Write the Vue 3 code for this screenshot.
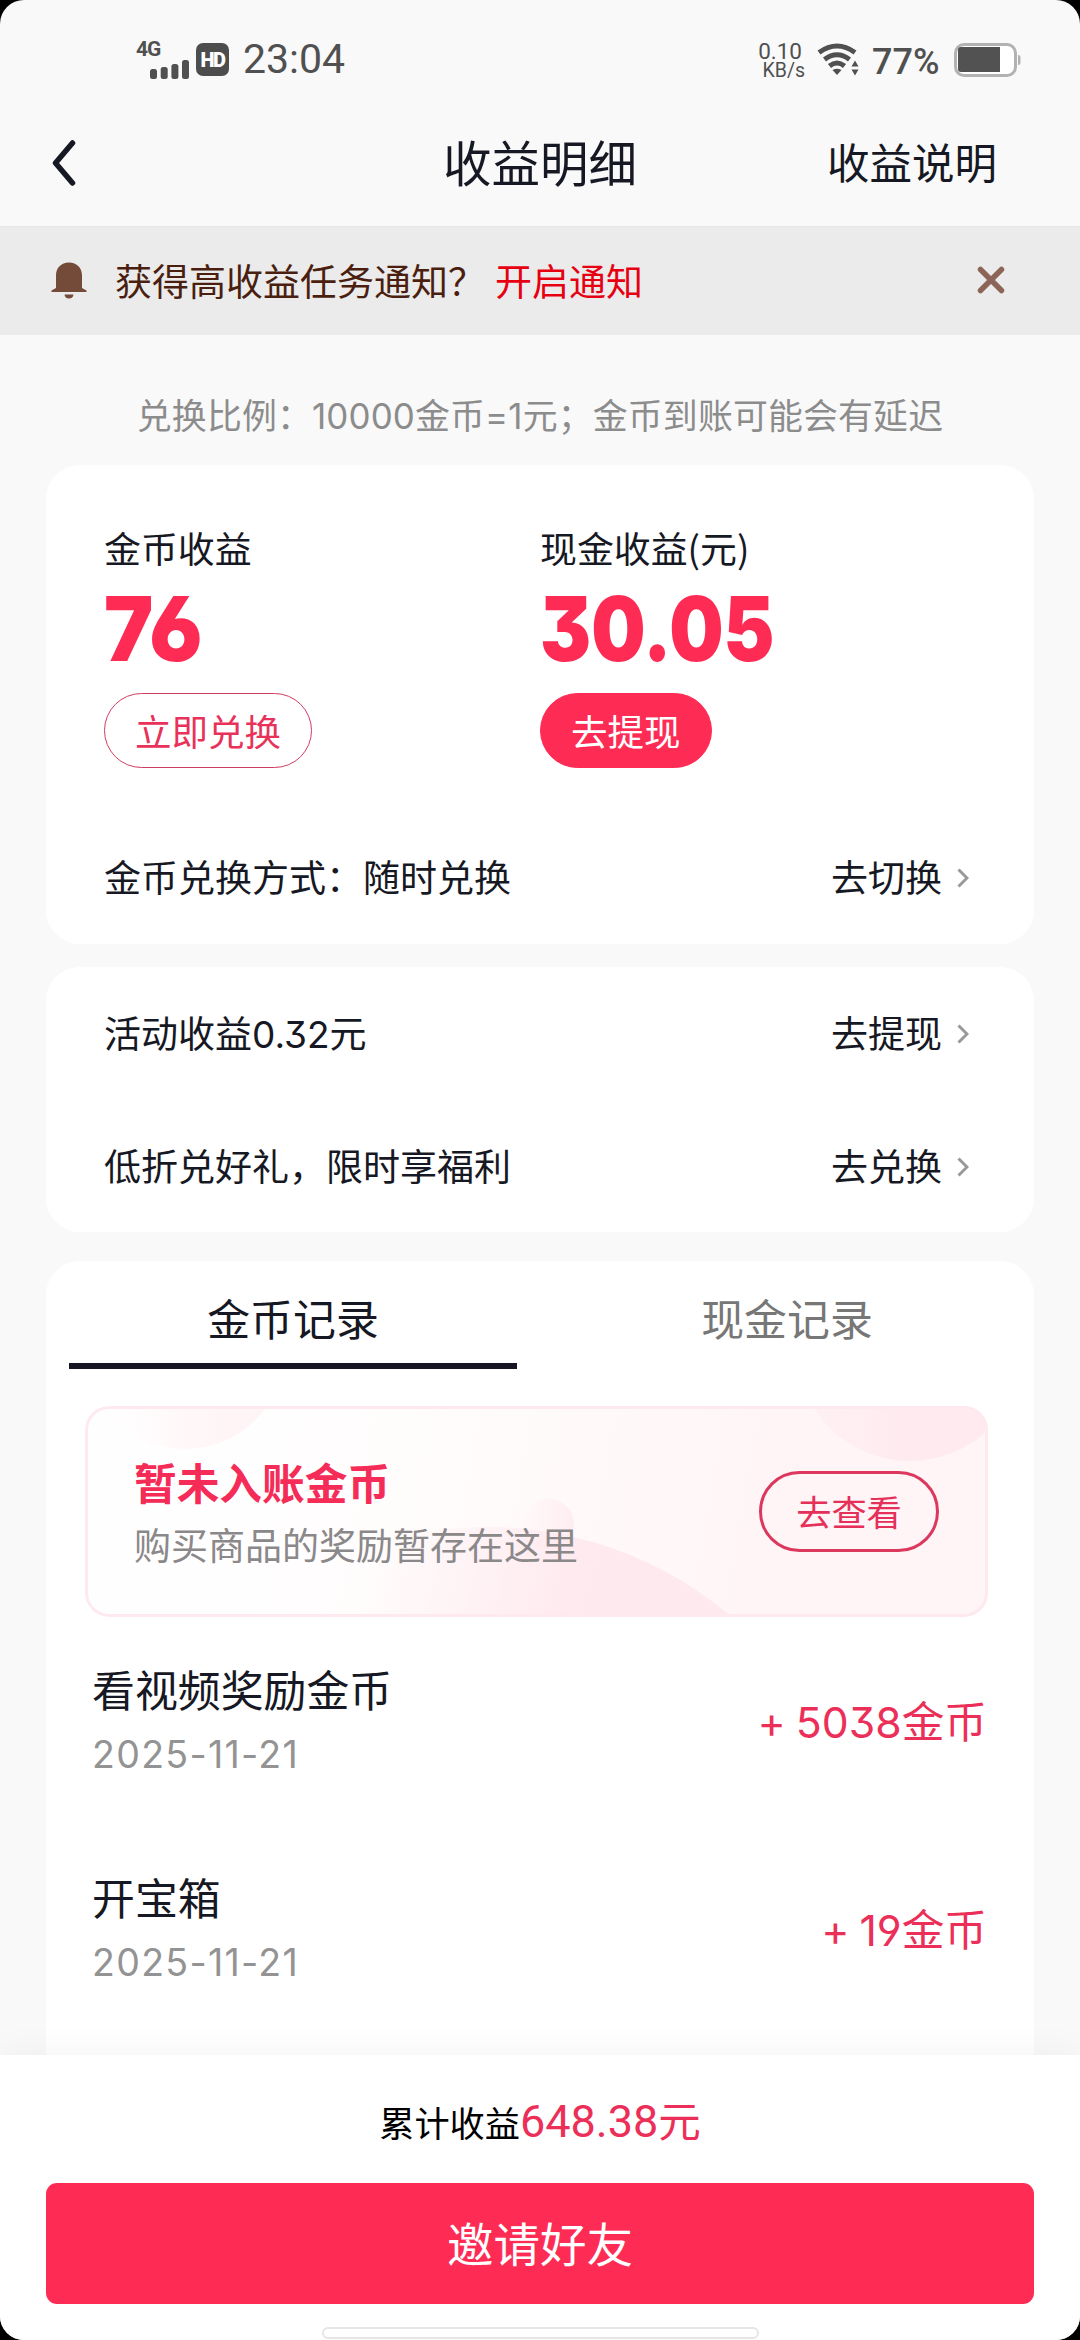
<script setup>
import { ref } from 'vue'

const records = [
  { title: '看视频奖励金币', date: '2025-11-21', amount: '5038' },
  { title: '开宝箱', date: '2025-11-21', amount: '19' },
]
const tabs = ['金币记录', '现金记录']
const activeTab = ref(0)
</script>

<template>
  <div class="device">
    <div class="screen">
      <header class="status">
        <div class="status-left">
          <div class="cell">
            <span class="net">4G</span>
            <svg class="signal" width="39" height="19" viewBox="0 0 39 19">
              <rect x="0" y="9" width="7" height="10" rx="2.5" />
              <rect x="10.700" y="7" width="7" height="12" rx="2.500" />
              <rect x="21.400" y="4" width="7" height="15" rx="2.500" />
              <rect x="32" y="0" width="7" height="19" rx="2.500" />
            </svg>
          </div>
          <span class="hd">HD</span>
          <span class="clock">23:04</span>
        </div>
        <div class="status-right">
          <span class="speed"><b>0.10</b><i>KB/s</i></span>
          <svg class="wifi" width="44" height="33" viewBox="0 0 44 33">
            <g fill="none" stroke="#505050" stroke-width="5">
              <path d="M2 9.500Q20 -3.500 38 9.500" />
              <path d="M7.500 16.500Q20 7 32.500 16.500" />
              <path d="M12.500 23Q20 17 27.500 23" />
            </g>
            <path fill="#505050" d="M15.500 27Q20 24.500 24.500 27L20 32Z" />
            <path fill="#505050" d="M34.500 23.500L38 17.500L41.500 23.500ZM34.500 26.500L38 32.500L41.500 26.500Z" />
          </svg>
          <span class="percent">77%</span>
          <svg class="battery" width="67" height="34" viewBox="0 0 67 34">
            <rect x="1.500" y="1.500" width="60" height="31" rx="8.500" fill="#fff" stroke="#b2b2b2" stroke-width="3" />
            <path d="M7 4H46V29H7Q4 29 4 26V7Q4 4 7 4Z" fill="#525252" />
            <path d="M64 12Q66.500 12 66.500 14V20Q66.500 22 64 22Z" fill="#b2b2b2" />
          </svg>
        </div>
      </header>

      <nav class="nav">
        <svg class="back" width="24" height="46" viewBox="0 0 24 46">
          <path d="M20.500 3L3.500 23L20.500 43" />
        </svg>
        <h1>收益明细</h1>
        <a class="explain">收益说明</a>
      </nav>

      <div class="notice">
        <svg class="bell" width="36" height="37" viewBox="0 0 36 37">
          <path d="M18 .5C26 .5 31 6 31 13.500V26L35.500 28.500V30H.5V28.500L5 26V13.500C5 6 10 .5 18 .5Z" />
          <path d="M13.500 32.500H22.500Q22 36.500 18 36.500T13.500 32.500Z" />
        </svg>
        <span class="question">获得高收益任务通知？</span>
        <a class="enable">开启通知</a>
        <svg class="close" width="28" height="28" viewBox="0 0 28 28">
          <path d="M3.500 3.500L24.500 24.500M24.500 3.500L3.500 24.500" />
        </svg>
      </div>

      <main class="content">
        <p class="ratio">兑换比例：<span class="num">10000</span>金币<span class="num">=1</span>元；金币到账可能会有延迟</p>

        <section class="card balance">
          <div class="amounts">
            <div class="amount coins">
              <span class="label">金币收益</span>
              <strong>76</strong>
              <button class="pill outline">立即兑换</button>
            </div>
            <div class="amount cash">
              <span class="label">现金收益(元)</span>
              <strong>30.05</strong>
              <button class="pill solid">去提现</button>
            </div>
          </div>
          <div class="row">
            <span class="text">金币兑换方式：随时兑换</span>
            <a><span class="text">去切换</span><svg class="chev" width="12" height="20" viewBox="0 0 12 20"><path d="M1.500 1.500L10 10L1.500 18.500" /></svg></a>
          </div>
        </section>

        <section class="card offers">
          <div class="row">
            <span class="text">活动收益<span class="num">0.32</span>元</span>
            <a><span class="text">去提现</span><svg class="chev" width="12" height="20" viewBox="0 0 12 20"><path d="M1.500 1.500L10 10L1.500 18.500" /></svg></a>
          </div>
          <div class="row">
            <span class="text">低折兑好礼，限时享福利</span>
            <a><span class="text">去兑换</span><svg class="chev" width="12" height="20" viewBox="0 0 12 20"><path d="M1.500 1.500L10 10L1.500 18.500" /></svg></a>
          </div>
        </section>

        <section class="card history">
          <div class="tabs">
            <div v-for="(tab, i) in tabs" :key="tab" class="tab" :class="{ active: i === activeTab }" @click="activeTab = i">
              {{ tab }}
            </div>
          </div>

          <div class="pending">
            <svg class="blobs" width="903" height="211" viewBox="0 0 903 211">
              <defs>
                <linearGradient id="b1" x1="0" x2="1"><stop offset="0.15" stop-color="#fff4f6" stop-opacity="0" /><stop offset="0.75" stop-color="#fff4f6" /></linearGradient>
                <linearGradient id="b2" x1="0" x2="1"><stop offset="0" stop-color="#feecf0" stop-opacity="0.4" /><stop offset="0.5" stop-color="#feeaef" /></linearGradient>
                <linearGradient id="b3" gradientUnits="userSpaceOnUse" x1="330" y1="0" x2="540" y2="60"><stop offset="0" stop-color="#fee9ef" stop-opacity="0" /><stop offset="1" stop-color="#fee9ee" /></linearGradient>
                <linearGradient id="b4" x1="0" x2="1"><stop offset="0" stop-color="#fff3f5" stop-opacity="0.3" /><stop offset="1" stop-color="#feedf2" /></linearGradient>
              </defs>
              <circle cx="100" cy="-57" r="100" fill="url(#b1)" />
              <circle cx="825" cy="-59" r="114" fill="url(#b2)" />
              <circle cx="464" cy="118" r="25" fill="url(#b4)" />
              <circle cx="403" cy="496" r="375" fill="url(#b3)" />
            </svg>
            <div class="pending-text">
              <h2>暂未入账金币</h2>
              <p>购买商品的奖励暂存在这里</p>
            </div>
            <button class="check">去查看</button>
          </div>

          <ul class="records">
            <li v-for="r in records" :key="r.title">
              <div class="info">
                <span class="title">{{ r.title }}</span>
                <span class="date">{{ r.date }}</span>
              </div>
              <span class="gain"><span class="plus">+</span><span class="num">{{ r.amount }}</span>金币</span>
            </li>
          </ul>
        </section>
      </main>

      <footer class="footer">
        <p class="total">累计收益<em><span class="sum">648.38</span>元</em></p>
        <button class="invite">邀请好友</button>
        <div class="home"></div>
      </footer>
    </div>
  </div>
</template>

<style>
body {
  background: #000;
}
</style>

<style scoped>
* {
  box-sizing: border-box;
}
h1, h2, p, ul {
  margin: 0;
  padding: 0;
  font-weight: 400;
}
button {
  font-family: inherit;
  padding: 0;
}
.device {
  width: 1080px;
  height: 2340px;
  background: #000;
  font-family: "Noto Sans CJK SC", sans-serif;
  color: #161823;
}
.screen {
  height: 100%;
  border-radius: 24px;
  background: #f9f9f9;
  overflow: hidden;
  display: flex;
  flex-direction: column;
}
.num {
  font-family: Inter, sans-serif;
  font-feature-settings: "cv09", "cv03", "cv04";
}

/* status bar */
.status {
  height: 102px;
  flex: none;
  padding: 17px 59px 0 136px;
  display: flex;
  align-items: center;
  justify-content: space-between;
  color: #505050;
  font-family: Roboto, sans-serif;
}
.status-left, .status-right {
  display: flex;
  align-items: center;
}
.cell {
  width: 53px;
  height: 42px;
  margin-bottom: 6px;
  display: flex;
  flex-direction: column;
}
.signal {
  align-self: flex-end;
  flex: none;
  margin-top: -1px;
  fill: #505050;
}
.net {
  font: 700 21px/24px Roboto, sans-serif;
  letter-spacing: -1px;
  padding-top: 1px;
}
.hd {
  width: 33px;
  height: 33px;
  margin-left: 7px;
  border-radius: 7px;
  background: #4d4d4d;
  color: #fff;
  font: 900 20px/35px Roboto, sans-serif;
  letter-spacing: -1.500px;
  text-align: center;
}
.clock {
  margin-left: 14px;
  font-size: 41px;
  line-height: 41px;
}
.speed {
  display: flex;
  flex-direction: column;
  align-items: flex-end;
  width: 46px;
  padding-top: 3px;
}
.speed b {
  font-size: 22.500px;
  line-height: 19px;
  font-weight: 400;
  margin-right: 3px;
}
.speed i {
  font-size: 19.500px;
  line-height: 19px;
  font-style: normal;
}
.wifi {
  margin-left: 12px;
}
.percent {
  margin: 4px 0 0 11px;
  width: 70px;
  font: 500 36px/34px Roboto, sans-serif;
  white-space: nowrap;
}
.battery {
  margin-left: 12px;
}

/* title bar */
.nav {
  height: 124px;
  flex: none;
  padding: 0 83px 6px 52px;
  display: grid;
  grid-template-columns: 1fr auto 1fr;
  align-items: center;
}
.back {
  margin-top: 4px;
  fill: none;
  stroke: #161823;
  stroke-width: 5.500px;
  stroke-linecap: round;
  stroke-linejoin: round;
}
.nav h1 {
  font-size: 48.500px;
  line-height: 60px;
  margin-left: 31px;
}
.explain {
  justify-self: end;
  font-size: 42.500px;
  line-height: 60px;
}

/* notification strip */
.notice {
  height: 109px;
  flex: none;
  background: #ebebeb;
  border-top: 1px solid #e6e6e6;
  padding: 0 75px 2px 51px;
  display: flex;
  align-items: center;
  font-size: 37px;
}
.bell {
  fill: #744a38;
}
.question {
  margin-left: 28px;
  color: #4a1f0f;
}
.enable {
  margin-left: 10px;
  color: #e60012;
}
.close {
  margin-left: auto;
  stroke: #8c6557;
  stroke-width: 5.500px;
  stroke-linecap: round;
}

/* content */
.content {
  height: 1720px;
  flex: none;
  padding: 0 46px;
  overflow: hidden;
}
.ratio {
  height: 130px;
  padding-top: 31px;
  line-height: 96px;
  font-size: 34.900px;
  letter-spacing: .15px;
  text-align: center;
  color: #8c8c8c;
  white-space: nowrap;
}
.card {
  background: #fff;
  border-radius: 34px;
}
.balance {
  height: 479px;
  padding: 54px 65px 0 58px;
}
.amounts {
  display: grid;
  grid-template-columns: 436px 1fr;
  height: 319px;
}
.amount {
  display: flex;
  flex-direction: column;
  align-items: flex-start;
}
.label {
  font-size: 36.900px;
  line-height: 56px;
}
.amount strong {
  font: 900 90px/90px Inter, sans-serif;
  font-feature-settings: "cv09", "cv03";
  color: #fe2c55;
  margin: 9px 0 19px;
  transform-origin: left;
}
.coins strong {
  transform: scaleX(.92);
}
.cash strong {
  transform: scaleX(.85);
}
.pill {
  height: 75px;
  border-radius: 38px;
  border: 1px solid #cf3c60;
  padding: 0 30px 1px;
  font-size: 36.500px;
}
.outline {
  background: #fff;
  color: #e8325a;
}
.solid {
  background: #fe2c55;
  border-color: #fe2c55;
  color: #fff;
}
.row {
  display: flex;
  align-items: center;
  justify-content: space-between;
  font-size: 37px;
  height: 80px;
}
.row a {
  display: flex;
  align-items: center;
}
.text {
  padding-bottom: 4px;
}
.chev {
  margin-left: 15px;
  fill: none;
  stroke: #999;
  stroke-width: 3px;
}
.offers {
  margin-top: 23px;
  height: 265px;
  padding: 27px 65px 0 58px;
  display: flex;
  flex-direction: column;
  gap: 53px;
}
.history {
  margin-top: 29px;
  height: 900px;
}
.tabs {
  display: flex;
  height: 109px;
}
.tab {
  flex: 1;
  height: 108px;
  margin: 0 23px;
  line-height: 112px;
  text-align: center;
  font-size: 42.900px;
  color: #777;
}
.tab.active {
  color: #161823;
  border-bottom: 6px solid #161523;
}
.pending {
  position: relative;
  margin: 36px 0 0 39px;
  width: 903px;
  height: 211px;
  border-radius: 24px;
  background: linear-gradient(100deg, #fffefe 20%, #fffafa 50%, #fff4f6 78%);
  overflow: hidden;
  display: flex;
  align-items: center;
  justify-content: space-between;
  padding: 0 49px;
}
.blobs {
  position: absolute;
  inset: 0;
}
.pending::after {
  content: "";
  position: absolute;
  inset: 0;
  border: 3px solid #fee9ee;
  border-radius: 24px;
}
.pending-text {
  position: relative;
}
.pending h2 {
  font-size: 42.700px;
  line-height: 64px;
  font-weight: 700;
  color: #f42c57;
}
.pending p {
  font-size: 37px;
  line-height: 62px;
  color: #8b888a;
}
.check {
  position: relative;
  width: 180px;
  height: 81px;
  border-radius: 41px;
  border: 3px solid #dc385e;
  background: transparent;
  color: #e5305a;
  font-size: 35.200px;
  padding-bottom: 2px;
  margin-bottom: 1px;
}
.records {
  list-style: none;
  padding: 35px 47px 0 46px;
}
.records li {
  height: 208px;
  display: flex;
  justify-content: space-between;
}
.info {
  display: flex;
  flex-direction: column;
}
.title {
  font-size: 42.900px;
  line-height: 72px;
}
.date {
  margin-top: 2px;
  font: 400 37.500px/58px Inter, sans-serif;
  letter-spacing: 1.300px;
  color: #939393;
}
.gain {
  font-size: 42.700px;
  line-height: 134px;
  color: #ec2f58;
}
.plus {
  font-family: Inter, sans-serif;
  margin-right: 10px;
}

/* bottom bar */
.footer {
  position: relative;
  flex: 1;
  background: #fff;
  box-shadow: 0 -6px 30px rgba(0, 0, 0, .04);
  padding: 0 46px;
  display: flex;
  flex-direction: column;
  align-items: center;
}
.total {
  height: 128px;
  line-height: 128px;
  font-size: 35.200px;
  color: #000;
}
.total em {
  font-style: normal;
  font-size: 42.500px;
  color: #ec2f58;
}
.sum {
  font-family: Roboto, sans-serif;
  font-size: 45px;
}
.invite {
  width: 988px;
  height: 121px;
  flex: none;
  border: 0;
  border-radius: 11px;
  background: #fe2c55;
  color: #fff;
  font-size: 46.500px;
  padding-bottom: 5px;
}
.home {
  width: 437px;
  height: 12px;
  flex: none;
  margin-top: 23px;
  border: 2px solid #e6e6e6;
  border-radius: 6px;
}
</style>
